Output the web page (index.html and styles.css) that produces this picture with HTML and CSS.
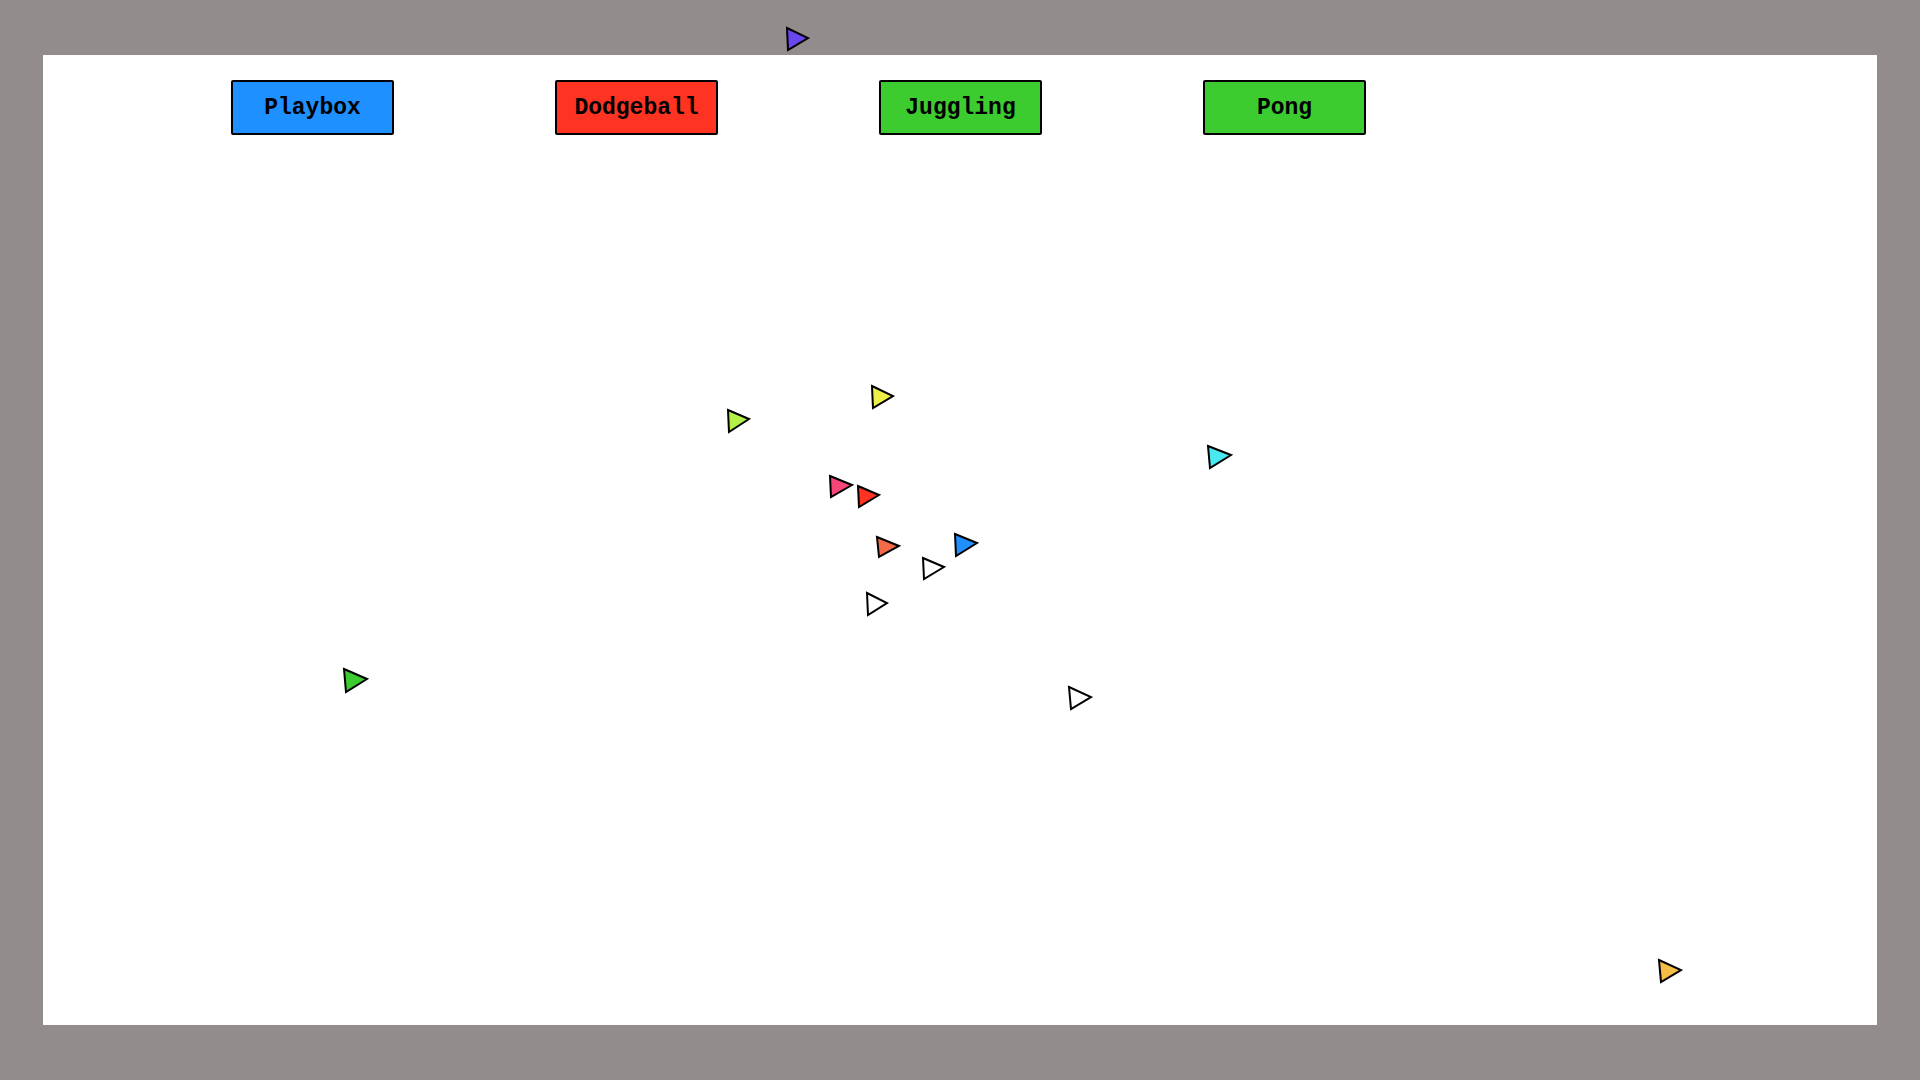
FILE: index.html
```html
<!DOCTYPE html>
<html>
<head>
<meta charset="utf-8">
<link rel="stylesheet" href="styles.css">
</head>
<body>
<div class="stage">
  <div class="canvas">
    <div class="menu">
      <button class="btn btn-blue">Playbox</button>
      <button class="btn btn-red">Dodgeball</button>
      <button class="btn btn-green">Juggling</button>
      <button class="btn btn-green">Pong</button>
    </div>
  </div>
  <svg class="sprites" width="1920" height="1080" viewBox="0 0 1920 1080">
    <g stroke="#000" stroke-width="2" stroke-linejoin="miter">
      <polygon fill="#6a46f0" points="787,28 808,38 788,50"/>
      <polygon fill="#b4f046" points="728,410 749,419 729,432"/>
      <polygon fill="#eef04a" points="872,386 893,396 873,408"/>
      <polygon fill="#f5467a" points="830,476 852,485 831,497"/>
      <polygon fill="#ff3322" points="858,486 879,495 859,507"/>
      <polygon fill="#f56a46" points="877,537 899,546 879,557"/>
      <polygon fill="#2090ff" points="955,534 977,543 956,556"/>
      <polygon fill="#ffffff" points="923,558 944,567 924,579"/>
      <polygon fill="#ffffff" points="867,593 887,603 868,615"/>
      <polygon fill="#4ae8f0" points="1208,446 1231,455 1210,468"/>
      <polygon fill="#3ccc30" points="344,669 367,679 346,692"/>
      <polygon fill="#ffffff" points="1069,687 1091,697 1071,709"/>
      <polygon fill="#f5be46" points="1659,960 1681,970 1661,982"/>
    </g>
  </svg>
</div>
</body>
</html>
```
FILE: styles.css
```css
html, body {
  margin: 0;
  padding: 0;
  background: #928c8c;
}
.stage {
  position: relative;
  width: 1920px;
  height: 1080px;
  padding: 55px 43px;
  box-sizing: border-box;
}
.canvas {
  width: 1834px;
  height: 970px;
  background: #ffffff;
  box-sizing: border-box;
  padding: 25px 0 0 188px;
}
.menu {
  display: flex;
  gap: 161px;
}
.btn {
  width: 163px;
  height: 55px;
  box-sizing: border-box;
  border: 2px solid #000;
  border-radius: 2px;
  font-family: "Liberation Mono", "Courier New", monospace;
  font-weight: bold;
  font-size: 23px;
  color: #000;
  padding: 0;
  margin: 0;
  display: flex;
  align-items: center;
  justify-content: center;
}
.btn-blue { background: #1e90ff; }
.btn-red { background: #ff3322; }
.btn-green { background: #3ccc30; }
.sprites {
  position: absolute;
  left: 0;
  top: 0;
  pointer-events: none;
}
```
